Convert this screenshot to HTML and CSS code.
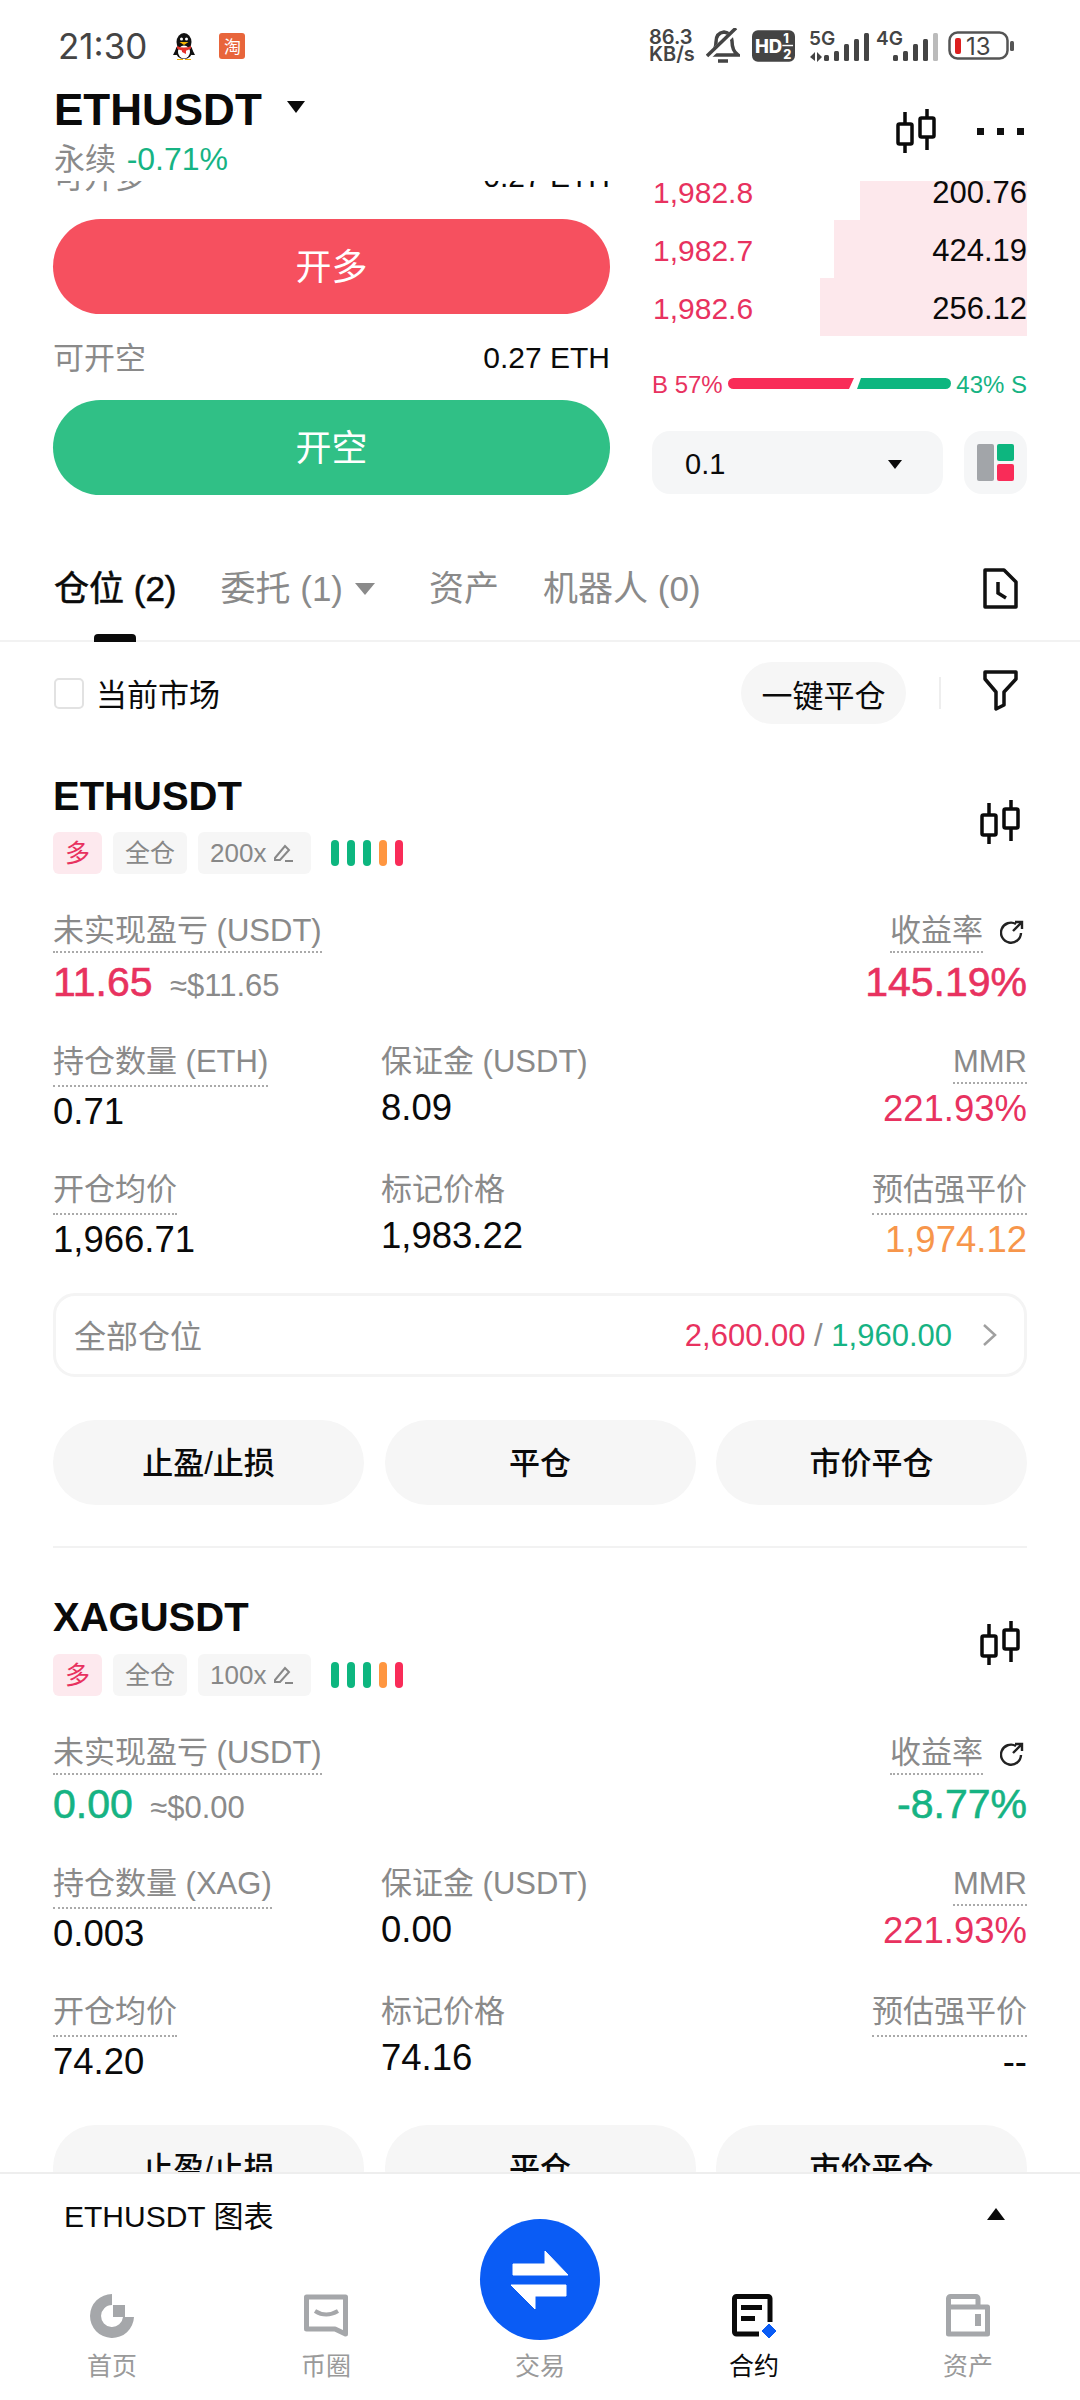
FILE: index.html
```html
<!DOCTYPE html>
<html lang="zh-CN">

<head>
    <meta charset="UTF-8">
    <meta name="viewport" content="width=device-width, initial-scale=1.0">
    <link rel="stylesheet" href="styles.css">
    <title>ETHUSDT</title>
</head>

<body>
    <svg class="defs" width="0" height="0">
        <symbol id="candles" viewBox="0 0 40 44">
            <path d="M9 3V44M31 0V41" fill="none" stroke="currentColor" stroke-width="3.5"/>
            <rect x="2" y="15" width="14" height="20" rx="1.5" fill="#fff" stroke="currentColor" stroke-width="3.5"/>
            <rect x="24" y="9" width="14" height="19" rx="1.5" fill="#fff" stroke="currentColor" stroke-width="3.5"/>
        </symbol>
        <symbol id="pencil" viewBox="0 0 20 20">
            <path d="M2 15L12 3L16 7L7 17H2ZM12 18H20" fill="none" stroke="currentColor" stroke-width="2"/>
        </symbol>
        <symbol id="refresh" viewBox="0 0 24 24">
            <path d="M16 4A10 10 0 1 0 21 13" fill="none" stroke="currentColor" stroke-width="2.4"/>
            <path d="M13 11L21 3M15 2H22V9" fill="none" stroke="currentColor" stroke-width="2.4"/>
        </symbol>
    </svg>

    <main class="phone">
        <div class="status">
            <div class="status-left">
                <span class="time">21:30</span>
                <svg class="qq" viewBox="0 0 22 27">
                    <ellipse cx="11" cy="9" rx="7.5" ry="9" fill="#111"/>
                    <ellipse cx="11" cy="18" rx="8.5" ry="8" fill="#111"/>
                    <path d="M3 16L0 22L4 22ZM19 16L22 22L18 22Z" fill="#111"/>
                    <ellipse cx="11" cy="19" rx="6" ry="6.5" fill="#fff"/>
                    <circle cx="8.5" cy="6" r="1.5" fill="#fff"/>
                    <circle cx="13.5" cy="6" r="1.5" fill="#fff"/>
                    <path d="M6.5 9H15.5L11 12Z" fill="#f5b400"/>
                    <path d="M4 13Q11 16 18 13V15.5Q14 17.5 13 17.5V21L9 19V17.5Q6 17 4 15.5Z" fill="#e5322b"/>
                    <path d="M4 26H10V27H4ZM12 26H18V27H12Z" fill="#f5b400"/>
                </svg>
                <span class="taobao">淘</span>
            </div>
            <div class="status-right">
                <div class="speed">86.3<br>KB/s</div>
                <svg class="bell" viewBox="0 0 34 36">
                    <path d="M5 27Q10 22 10 14Q10 5 18 4Q25 5 26 13Q26 23 32 27ZM12 33H22" fill="none" stroke="#444" stroke-width="3.5"/>
                    <path d="M1 30L31 1" stroke="#fff" stroke-width="6"/>
                    <path d="M1 28L30 0" stroke="#444" stroke-width="3.5"/>
                </svg>
                <svg class="hd" viewBox="0 0 44 32">
                    <rect width="44" height="32" rx="6" fill="#444"/>
                    <text x="3" y="23" class="hd-main">HD</text>
                    <text x="32" y="13" class="hd-frac">1</text>
                    <text x="32" y="29" class="hd-frac">2</text>
                    <path d="M31 15.5H42" stroke="#fff" stroke-width="1.5"/>
                </svg>
                <svg class="signal" viewBox="0 0 62 32">
                    <text x="2" y="15" class="sig-text">5G</text>
                    <path d="M3 27L8 22V31ZM15 27L10 32V22Z" fill="#444"/>
                    <rect x="17" y="25" width="5" height="6" rx="1.5" fill="#444"/>
                    <rect x="27" y="21" width="5" height="10" rx="1.5" fill="#444"/>
                    <rect x="37" y="14" width="5" height="17" rx="1.5" fill="#444"/>
                    <rect x="47" y="9" width="5" height="22" rx="1.5" fill="#444"/>
                    <rect x="57" y="3" width="5" height="28" rx="1.5" fill="#444"/>
                </svg>
                <svg class="signal signal-4g" viewBox="0 0 62 32">
                    <text x="0" y="15" class="sig-text">4G</text>
                    <rect x="17" y="25" width="5" height="6" rx="1.5" fill="#444"/>
                    <rect x="27" y="21" width="5" height="10" rx="1.5" fill="#444"/>
                    <rect x="37" y="14" width="5" height="17" rx="1.5" fill="#444"/>
                    <rect x="47" y="9" width="5" height="22" rx="1.5" fill="#444"/>
                    <rect x="57" y="3" width="5" height="28" rx="1.5" fill="#bbb"/>
                </svg>
                <svg class="battery" viewBox="0 0 66 30">
                    <rect x="1.5" y="1.5" width="58" height="26" rx="8" fill="none" stroke="#555" stroke-width="2.5"/>
                    <rect x="7" y="7" width="6" height="16" rx="2" fill="#dc2020"/>
                    <text x="18" y="24" class="bat-text">13</text>
                    <rect x="62" y="10" width="4" height="10" rx="1.5" fill="#555"/>
                </svg>
            </div>
        </div>

        <header class="topbar">
            <div>
                <div class="pair">
                    <span class="pair-name">ETHUSDT</span>
                    <i class="caret caret-pair"></i>
                </div>
                <div class="pair-sub">永续 <span class="pair-change">-0.71%</span></div>
            </div>
            <div class="top-icons">
                <svg class="icon-candles"><use href="#candles"/></svg>
                <div class="dots"><i></i><i></i><i></i></div>
            </div>
        </header>

        <div class="scroll">
            <section class="trade">
                <div class="trade-left">
                    <div class="avail"><span class="avail-label">可开多</span><span>0.27 ETH</span></div>
                    <button class="big-btn big-long">开多</button>
                    <div class="avail avail-second"><span class="avail-label">可开空</span><span>0.27 ETH</span></div>
                    <button class="big-btn big-short">开空</button>
                </div>
                <div class="trade-right">
                    <div class="book-row"><i class="depth" style="width:167px"></i><span class="book-price">1,982.8</span><span class="book-size">200.76</span></div>
                    <div class="book-row"><i class="depth" style="width:193px"></i><span class="book-price">1,982.7</span><span class="book-size">424.19</span></div>
                    <div class="book-row"><i class="depth" style="width:207px"></i><span class="book-price">1,982.6</span><span class="book-size">256.12</span></div>
                    <div class="ratio">
                        <span class="up">B 57%</span>
                        <svg class="ratio-bar" viewBox="0 0 223 11">
                            <path d="M5.5 0H126L121 11H5.5A5.5 5.5 0 0 1 5.5 0Z" fill="#f92c58"/>
                            <path d="M133 0H217.5A5.5 5.5 0 0 1 217.5 11H129Z" fill="#0db67f"/>
                        </svg>
                        <span class="down">43% S</span>
                    </div>
                    <div class="depth-tools">
                        <div class="step"><span>0.1</span><i class="caret caret-step"></i></div>
                        <div class="layout-btn">
                            <svg class="layout-icon" viewBox="0 0 37 37">
                                <rect width="17" height="37" rx="2" fill="#a2a5a9"/>
                                <rect x="20" width="17" height="17" rx="2" fill="#0db67f"/>
                                <rect x="20" y="20" width="17" height="17" rx="2" fill="#f92c58"/>
                            </svg>
                        </div>
                    </div>
                </div>
            </section>

            <nav class="tabs">
                <div class="tab tab-on">仓位 (2)<i class="tab-line"></i></div>
                <div class="tab tab-order">委托 (1)<i class="caret caret-tab"></i></div>
                <div class="tab tab-asset">资产</div>
                <div class="tab tab-bot">机器人 (0)</div>
                <svg class="icon-doc" viewBox="0 0 35 41">
                    <path d="M2 2H21L33 14V39H2Z" fill="none" stroke="#111" stroke-width="3.5" stroke-linejoin="round"/>
                    <path d="M15 14V25L23 30" fill="none" stroke="#111" stroke-width="3.5"/>
                </svg>
            </nav>

            <div class="filter">
                <i class="check"></i>
                <span class="filter-text">当前市场</span>
                <button class="close-all">一键平仓</button>
                <i class="filter-sep"></i>
                <svg class="icon-filter" viewBox="0 0 35 41">
                    <path d="M2 2H33V9L21 22V35L13 39V22L2 9Z" fill="none" stroke="#111" stroke-width="3.5" stroke-linejoin="round"/>
                </svg>
            </div>

            <article class="card">
                <div class="card-head">
                    <div>
                        <h2 class="symbol">ETHUSDT</h2>
                        <div class="tags">
                            <span class="tag tag-long">多</span>
                            <span class="tag">全仓</span>
                            <span class="tag tag-lev">200x <svg class="pencil"><use href="#pencil"/></svg></span>
                            <div class="adl"><i></i><i></i><i></i><i class="adl-o"></i><i class="adl-r"></i></div>
                        </div>
                    </div>
                    <svg class="icon-candles icon-card"><use href="#candles"/></svg>
                </div>
                <div class="pnl-row">
                    <div class="cell">
                        <span class="label dotted dotted-top">未实现盈亏 (USDT)</span>
                        <div class="value-big up">11.65 <span class="approx">≈$11.65</span></div>
                    </div>
                    <div class="cell cell-end">
                        <div class="roe-label"><span class="label dotted dotted-top">收益率</span><svg class="refresh"><use href="#refresh"/></svg></div>
                        <div class="value-big up">145.19%</div>
                    </div>
                </div>
                <div class="stats">
                    <div class="cell">
                        <span class="label dotted">持仓数量 (ETH)</span>
                        <div class="value">0.71</div>
                    </div>
                    <div class="cell">
                        <span class="label plain">保证金 (USDT)</span>
                        <div class="value">8.09</div>
                    </div>
                    <div class="cell cell-end">
                        <span class="label dotted dotted-top">MMR</span>
                        <div class="value up">221.93%</div>
                    </div>
                    <div class="cell">
                        <span class="label dotted">开仓均价</span>
                        <div class="value">1,966.71</div>
                    </div>
                    <div class="cell">
                        <span class="label plain">标记价格</span>
                        <div class="value">1,983.22</div>
                    </div>
                    <div class="cell cell-end">
                        <span class="label dotted">预估强平价</span>
                        <div class="value warn">1,974.12</div>
                    </div>
                </div>
                <div class="all-pos">
                    <span class="all-label">全部仓位</span>
                    <span class="all-nums"><span class="up">2,600.00</span> / <span class="down">1,960.00</span></span>
                    <svg class="chev" viewBox="0 0 15 24">
                        <path d="M2 2L13 12L2 22" fill="none" stroke="#a0a0a0" stroke-width="2.5"/>
                    </svg>
                </div>
                <div class="actions">
                    <button class="act">止盈/止损</button>
                    <button class="act">平仓</button>
                    <button class="act">市价平仓</button>
                </div>
            </article>

            <article class="card card-second">
                <div class="card-head">
                    <div>
                        <h2 class="symbol">XAGUSDT</h2>
                        <div class="tags">
                            <span class="tag tag-long">多</span>
                            <span class="tag">全仓</span>
                            <span class="tag tag-lev">100x <svg class="pencil"><use href="#pencil"/></svg></span>
                            <div class="adl"><i></i><i></i><i></i><i class="adl-o"></i><i class="adl-r"></i></div>
                        </div>
                    </div>
                    <svg class="icon-candles icon-card"><use href="#candles"/></svg>
                </div>
                <div class="pnl-row">
                    <div class="cell">
                        <span class="label dotted dotted-top">未实现盈亏 (USDT)</span>
                        <div class="value-big down">0.00 <span class="approx">≈$0.00</span></div>
                    </div>
                    <div class="cell cell-end">
                        <div class="roe-label"><span class="label dotted dotted-top">收益率</span><svg class="refresh"><use href="#refresh"/></svg></div>
                        <div class="value-big down">-8.77%</div>
                    </div>
                </div>
                <div class="stats">
                    <div class="cell">
                        <span class="label dotted">持仓数量 (XAG)</span>
                        <div class="value">0.003</div>
                    </div>
                    <div class="cell">
                        <span class="label plain">保证金 (USDT)</span>
                        <div class="value">0.00</div>
                    </div>
                    <div class="cell cell-end">
                        <span class="label dotted dotted-top">MMR</span>
                        <div class="value up">221.93%</div>
                    </div>
                    <div class="cell">
                        <span class="label dotted">开仓均价</span>
                        <div class="value">74.20</div>
                    </div>
                    <div class="cell">
                        <span class="label plain">标记价格</span>
                        <div class="value">74.16</div>
                    </div>
                    <div class="cell cell-end">
                        <span class="label dotted">预估强平价</span>
                        <div class="value">--</div>
                    </div>
                </div>
                <div class="actions">
                    <button class="act">止盈/止损</button>
                    <button class="act">平仓</button>
                    <button class="act">市价平仓</button>
                </div>
            </article>
        </div>

        <footer class="bottom">
            <div class="chart-bar">
                <span>ETHUSDT 图表</span>
                <i class="caret caret-up"></i>
            </div>
            <div class="nav">
                <div class="nav-item">
                    <svg class="nav-icon" viewBox="0 0 44 44">
                        <path d="M22 0A22 22 0 1 0 44 23H33A11 11 0 1 1 22 11Z" fill="#a5a7aa"/>
                        <rect x="23" y="11" width="12" height="12" fill="#a5a7aa"/>
                    </svg>
                    <span>首页</span>
                </div>
                <div class="nav-item">
                    <svg class="nav-icon" viewBox="0 0 44 44">
                        <path d="M2.5 3H41.5V40L31 35H2.5Z" fill="none" stroke="#a5a7aa" stroke-width="5" stroke-linejoin="round"/>
                        <path d="M11 17Q22 24 34 17" fill="none" stroke="#a5a7aa" stroke-width="4"/>
                    </svg>
                    <span>币圈</span>
                </div>
                <div class="nav-item">
                    <i class="nav-icon"></i>
                    <span>交易</span>
                </div>
                <div class="nav-item nav-on">
                    <svg class="nav-icon" viewBox="0 0 44 44">
                        <path d="M27 40H4.5A2 2 0 0 1 2.5 38V4.5A2 2 0 0 1 4.5 2.5H36A2 2 0 0 1 38 4.5V28" fill="none" stroke="#0a0a0a" stroke-width="5"/>
                        <rect x="9" y="11" width="21" height="5" fill="#0a0a0a"/>
                        <rect x="9" y="22" width="14" height="5" fill="#0a0a0a"/>
                        <path d="M37 30L44 37L37 44L30 37Z" fill="#0a5cf5" stroke="#0a5cf5" stroke-linejoin="round"/>
                    </svg>
                    <span>合约</span>
                </div>
                <div class="nav-item">
                    <svg class="nav-icon" viewBox="0 0 44 44">
                        <path d="M2.5 13V4.5A2 2 0 0 1 4.5 2.5H30A2 2 0 0 1 32 4.5V13M41.5 13H2.5V40H41.5Z" fill="none" stroke="#a5a7aa" stroke-width="5" stroke-linejoin="round"/>
                        <rect x="29" y="20" width="6" height="12" fill="#a5a7aa"/>
                    </svg>
                    <span>资产</span>
                </div>
            </div>
            <button class="swap">
                <svg class="swap-icon" viewBox="0 0 120 121">
                    <path d="M33 45H65V32L88 56H33ZM86 66V77H55V90L31 66Z" fill="#fff" stroke="#fff" stroke-linejoin="round"/>
                </svg>
            </button>
        </footer>
    </main>
</body>

</html>
```

FILE: styles.css
```css
* {
    margin: 0;
    padding: 0;
    box-sizing: border-box;
}

body {
    background: #fff;
    font-family: "Liberation Sans", "Noto Sans CJK SC", sans-serif;
    color: #0a0a0a;
}

button {
    border: none;
    font-family: inherit;
}

i {
    display: block;
}

.defs {
    display: block;
    height: 0;
}

.phone {
    position: relative;
    width: 1080px;
    height: 2400px;
    display: flex;
    flex-direction: column;
    overflow: hidden;
    background: #fff;
}

.up {
    color: #e8325f;
}

.down {
    color: #16b383;
}

.warn {
    color: #f7964b;
}

.caret {
    width: 0;
    height: 0;
    border-left: 9px solid transparent;
    border-right: 9px solid transparent;
    border-top: 12px solid #0a0a0a;
}

/* status bar */
.status {
    height: 84px;
    padding: 8px 66px 0 58px;
    flex-shrink: 0;
    display: flex;
    justify-content: space-between;
    align-items: center;
    font-family: Inter, sans-serif;
}

.status-left {
    display: flex;
    align-items: center;
}

.time {
    font-size: 35px;
    color: #444;
    margin-right: 26px;
}

.qq {
    width: 22px;
    height: 27px;
    margin-right: 24px;
}

.taobao {
    width: 26px;
    height: 26px;
    border-radius: 3px;
    background: #e8653b;
    color: #fff;
    font-family: "Noto Sans CJK SC", sans-serif;
    font-size: 17px;
    line-height: 26px;
    text-align: center;
}

.status-right {
    display: flex;
    align-items: center;
}

.speed {
    font-size: 20px;
    font-weight: 600;
    line-height: 17px;
    color: #444;
    width: 57px;
}

.bell {
    width: 34px;
    height: 36px;
    margin-right: 12px;
}

.hd {
    width: 43px;
    height: 32px;
    margin-right: 12px;
}

.hd-main {
    font-size: 19px;
    font-weight: 800;
    fill: #fff;
}

.hd-frac {
    font-size: 13px;
    font-weight: 800;
    fill: #fff;
}

.signal {
    width: 62px;
    height: 32px;
    margin-right: 7px;
}

.signal-4g {
    margin-right: 10px;
}

.sig-text {
    font-size: 19px;
    font-weight: 600;
    fill: #444;
}

.battery {
    width: 66px;
    height: 30px;
}

.bat-text {
    font-size: 24px;
    fill: #444;
}

/* pair header */
.topbar {
    height: 97px;
    padding: 0 56px 0 54px;
    flex-shrink: 0;
    display: flex;
    justify-content: space-between;
    background: #fff;
}

.pair {
    height: 50px;
    margin-top: 1px;
    display: flex;
    align-items: center;
}

.pair-name {
    font-size: 44px;
    font-weight: 700;
    line-height: 50px;
}

.caret-pair {
    margin: -6px 0 0 25px;
}

.pair-sub {
    margin-top: 2px;
    font-size: 31px;
    line-height: 44px;
    color: #8a8a8a;
}

.pair-change {
    margin-left: 2px;
    font-size: 32px;
    color: #16b383;
}

.top-icons {
    display: flex;
    align-items: center;
    height: 94px;
}

.icon-candles {
    width: 40px;
    height: 44px;
    color: #0a0a0a;
}

.dots {
    display: flex;
    gap: 13px;
    margin-left: 41px;
}

.dots i {
    width: 7px;
    height: 7px;
    background: #111;
}

/* scrolled content under the header */
.scroll {
    flex: 1;
    min-height: 0;
    overflow: hidden;
}

.trade {
    margin-top: -21px;
    padding: 0 53px;
    display: flex;
    justify-content: space-between;
}

.trade-left {
    width: 557px;
}

.avail {
    height: 34px;
    margin-bottom: 25px;
    display: flex;
    justify-content: space-between;
    align-items: center;
    font-size: 30px;
}

.avail-second {
    margin-top: 27px;
}

.avail-label {
    margin-bottom: 6px;
    font-size: 31px;
    color: #8a8a8a;
}

.big-btn {
    display: block;
    width: 100%;
    height: 95px;
    padding-bottom: 6px;
    border-radius: 48px;
    color: #fff;
    font-size: 36px;
}

.big-long {
    background: #f6505f;
}

.big-short {
    background: #30c086;
}

.trade-right {
    width: 375px;
    padding-top: 2px;
}

.book-row {
    position: relative;
    height: 58px;
    padding-top: 3px;
    display: flex;
    justify-content: space-between;
    align-items: center;
    font-size: 30px;
}

.depth {
    position: absolute;
    top: 0;
    right: 0;
    bottom: 0;
    background: #fde8ec;
}

.book-price {
    position: relative;
    margin-left: 1px;
    color: #e8325f;
}

.book-size {
    position: relative;
    font-size: 31px;
}

.ratio {
    margin-top: 37px;
    height: 24px;
    display: flex;
    justify-content: space-between;
    align-items: center;
    font-size: 24px;
}

.ratio-bar {
    width: 223px;
    height: 11px;
    margin-top: -4px;
}

.depth-tools {
    margin-top: 34px;
    display: flex;
    justify-content: space-between;
}

.step {
    width: 291px;
    height: 63px;
    padding: 3px 41px 0 33px;
    border-radius: 18px;
    background: #f5f6f7;
    display: flex;
    justify-content: space-between;
    align-items: center;
    font-size: 29px;
}

.caret-step {
    border-left-width: 7px;
    border-right-width: 7px;
    border-top-width: 9px;
}

.layout-btn {
    width: 63px;
    height: 63px;
    border-radius: 18px;
    background: #f5f6f7;
    display: flex;
    align-items: center;
    justify-content: center;
}

.layout-icon {
    width: 37px;
    height: 37px;
}

/* tabs */
.tabs {
    height: 147px;
    padding: 74px 62px 0 54px;
    display: flex;
    align-items: flex-start;
    border-bottom: 2px solid #f2f2f2;
    font-size: 35px;
    line-height: 40px;
    color: #8a8a8a;
}

.tab {
    flex-shrink: 0;
}

.tab-on {
    color: #0a0a0a;
    -webkit-text-stroke: 0.6px currentColor;
    display: flex;
    flex-direction: column;
    align-items: center;
}

.tab-line {
    width: 42px;
    height: 8px;
    margin-top: 25px;
    border-radius: 4px 4px 0 0;
    background: #0a0a0a;
}

.tab-order {
    margin-left: 44px;
    display: flex;
    align-items: center;
}

.caret-tab {
    margin-left: 12px;
    border-top-color: #8a8a8a;
    border-left-width: 10px;
    border-right-width: 10px;
}

.tab-asset {
    margin-left: 54px;
}

.tab-bot {
    margin-left: 44px;
}

.icon-doc {
    width: 35px;
    height: 41px;
    margin-left: auto;
    margin-top: -1px;
}

/* market filter */
.filter {
    padding: 19px 62px 0 54px;
    height: 83px;
    display: flex;
    align-items: center;
}

.check {
    width: 30px;
    height: 31px;
    border: 2px solid #e2e2e2;
    border-radius: 5px;
    margin-right: 12px;
}

.filter-text {
    margin-bottom: 2px;
    font-size: 31px;
}

.close-all {
    margin-left: auto;
    width: 165px;
    height: 62px;
    border-radius: 31px;
    background: #f6f6f6;
    color: #0a0a0a;
    font-size: 31px;
}

.filter-sep {
    width: 2px;
    height: 32px;
    margin: 0 42px 0 33px;
    background: #eee;
}

.icon-filter {
    width: 35px;
    height: 41px;
    margin-top: -6px;
}

/* position cards */
.card {
    padding: 47px 53px 0;
}

.card-second {
    margin: 41px 53px 0;
    padding: 45px 0 0;
    border-top: 2px solid #f2f2f2;
}

.card-second .tags {
    margin-top: 13px;
}

.card-head {
    display: flex;
    justify-content: space-between;
}

.symbol {
    font-size: 40px;
    font-weight: 700;
    line-height: 48px;
}

.icon-card {
    margin: 28px 7px 0 0;
}

.tags {
    margin-top: 12px;
    display: flex;
    align-items: center;
    gap: 11px;
}

.tag {
    height: 42px;
    padding: 0 12px;
    border-radius: 6px;
    background: #f6f6f6;
    color: #888;
    font-size: 25px;
    line-height: 42px;
    display: flex;
    align-items: center;
    gap: 7px;
}

.tag-lev {
    width: 113px;
    font-size: 26px;
}

.tag-long {
    background: #fde9ee;
    color: #e8325f;
}

.pencil {
    width: 20px;
    height: 20px;
}

.adl {
    margin-left: 9px;
    display: flex;
    gap: 8px;
}

.adl i {
    width: 8px;
    height: 26px;
    border-radius: 4px;
    background: #0db67f;
}

.adl .adl-o {
    background: #ff9640;
}

.adl .adl-r {
    background: #f92c58;
}

.pnl-row {
    margin-top: 39px;
    display: flex;
    justify-content: space-between;
}

.cell {
    display: flex;
    flex-direction: column;
    align-items: flex-start;
}

.cell-end {
    align-items: flex-end;
}

.label {
    font-size: 31px;
    line-height: 36px;
    color: #8a8a8a;
}

.dotted {
    padding-bottom: 5px;
    border-bottom: 2px dotted #aaa;
}

.dotted-top {
    padding-bottom: 2px;
}

.plain {
    padding-bottom: 1px;
    border-bottom: 2px solid transparent;
}

.roe-label {
    display: flex;
    align-items: flex-start;
}

.refresh {
    width: 24px;
    height: 24px;
    margin: 7px 3px 0 17px;
    color: #222;
}

.value-big {
    margin-top: 7px;
    font-size: 41px;
    -webkit-text-stroke: 0.6px currentColor;
    line-height: 44px;
}

.approx {
    margin-left: 6px;
    font-size: 31px;
    -webkit-text-stroke: 0;
    color: #8a8a8a;
}

.stats {
    margin-top: 36px;
    display: grid;
    grid-template-columns: 328px 1fr auto;
    row-gap: 38px;
}

.value {
    margin-top: 3px;
    font-size: 36.5px;
    line-height: 44px;
}

.all-pos {
    margin-top: 31px;
    height: 84px;
    padding: 0 27px 0 18px;
    border: 3px solid #f4f4f4;
    border-radius: 22px;
    display: flex;
    align-items: center;
    font-size: 31px;
    color: #8a8a8a;
}

.all-label {
    margin-bottom: 2px;
    font-size: 32px;
}

.all-nums {
    margin-left: auto;
    padding-top: 2px;
}

.chev {
    width: 15px;
    height: 24px;
    margin-left: 30px;
}

.actions {
    margin-top: 43px;
    display: flex;
    justify-content: space-between;
}

.card-second .actions {
    margin-top: 41px;
}

.act {
    width: 311px;
    height: 85px;
    padding-bottom: 4px;
    border-radius: 43px;
    background: #f6f6f6;
    color: #0a0a0a;
    font-size: 31px;
    font-weight: 500;
}

/* bottom sheet and nav */
.bottom {
    position: relative;
    height: 228px;
    flex-shrink: 0;
    border-top: 2px solid #eee;
    background: #fff;
}

.chart-bar {
    height: 80px;
    padding: 0 75px 0 64px;
    display: flex;
    justify-content: space-between;
    align-items: center;
    font-size: 30px;
}

.caret-up {
    border-top: none;
    border-bottom: 12px solid #0a0a0a;
}

.nav {
    padding: 40px 5px 0;
    display: grid;
    grid-template-columns: repeat(5, 1fr);
}

.nav-item {
    display: flex;
    flex-direction: column;
    align-items: center;
    font-size: 25px;
    line-height: 30px;
    color: #9a9a9a;
}

.nav-icon {
    width: 44px;
    height: 44px;
    margin-bottom: 13px;
}

.nav-on {
    color: #0a0a0a;
}

.swap {
    position: absolute;
    left: 480px;
    top: 45px;
    width: 120px;
    height: 121px;
    border-radius: 50%;
    background: #0a5cf5;
}

.swap-icon {
    display: block;
    width: 120px;
    height: 121px;
}
```
